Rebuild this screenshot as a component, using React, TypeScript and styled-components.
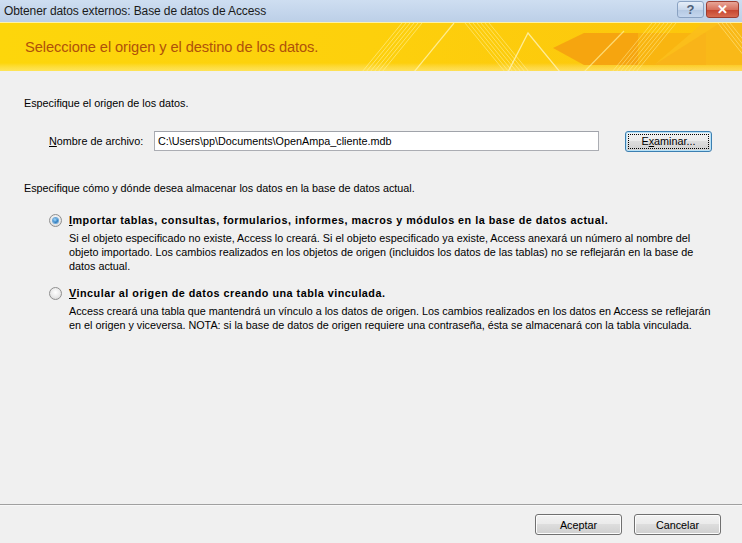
import React from "react";
import styled, { createGlobalStyle } from "styled-components";

const Global = createGlobalStyle`
  html, body { margin: 0; padding: 0; background: #f0f0f0; }
  body { font-family: "Liberation Sans", Arial, sans-serif; }
`;

const Window = styled.div`
  width: 742px;
  height: 543px;
  display: flex;
  flex-direction: column;
  background: #f0f0f0;
  overflow: hidden;
  font-family: "Liberation Sans", Arial, sans-serif;
  font-size: 10.8px;
  color: #000;
`;

const TitleBar = styled.div`
  height: 22px;
  flex: none;
  display: flex;
  align-items: center;
  justify-content: space-between;
  padding: 0 3px 0 4px;
  background: linear-gradient(#cedef1, #bccfe7);
  box-sizing: border-box;
`;

const TitleText = styled.span`
  font-size: 12px;
  color: #1a1a1a;
  letter-spacing: -0.1px;
`;

const TitleButtons = styled.div`
  display: flex;
  gap: 2px;
  align-self: flex-start;
  margin-top: 1px;
`;

const CaptionButton = styled.div<{ $kind: "help" | "close" }>`
  width: ${(p) => (p.$kind === "help" ? 27 : 33)}px;
  height: 17px;
  box-sizing: border-box;
  border-radius: 3px;
  border: 1px solid ${(p) => (p.$kind === "help" ? "#8aa2c2" : "#9c3c30")};
  background: ${(p) =>
    p.$kind === "help"
      ? "linear-gradient(#e6eef8 0%, #c9d8ec 50%, #b4c8e2 51%, #c4d6ee 100%)"
      : "linear-gradient(#e8a597 0%, #d7705e 50%, #c4432d 51%, #d86a4f 100%)"};
  display: flex;
  align-items: center;
  justify-content: center;
  color: ${(p) => (p.$kind === "help" ? "#4f5f78" : "#fff")};
  font-size: 13px;
  font-weight: bold;
  line-height: 1;
`;

const Banner = styled.div`
  position: relative;
  height: 49px;
  flex: none;
  border-top: 1px solid #fff3a6;
  box-sizing: border-box;
  background: linear-gradient(90deg, #fdd60b 0%, #fdd00c 50%, #fcc50d 100%);
  display: flex;
  align-items: center;
  padding-left: 25px;
  overflow: hidden;
`;

const BannerArt = styled.svg`
  position: absolute;
  left: 0;
  top: 0;
  width: 742px;
  height: 49px;
`;

const BannerTitle = styled.h1`
  position: relative;
  margin: 0;
  font-weight: normal;
  font-size: 14.7px;
  letter-spacing: -0.1px;
  color: #b0510a;
  font-family: "Liberation Sans", Arial, sans-serif;
`;

const Content = styled.div`
  flex: 1;
  display: flex;
  flex-direction: column;
  padding: 25px 0 0 24px;
`;

const Para = styled.p`
  margin: 0;
  line-height: 14px;
`;

const FileRow = styled.div`
  display: flex;
  align-items: center;
  margin: 20px 0 0 25px;
  height: 22px;
`;

const FieldLabel = styled.label`
  width: 105px;
  line-height: 14px;
`;

const TextBox = styled.div`
  width: 445px;
  height: 20px;
  box-sizing: border-box;
  border: 1px solid #abadb3;
  border-top-color: #a0a3aa;
  background: #fff;
  display: flex;
  align-items: center;
  padding-left: 3px;
`;

const Button = styled.button<{ $focused?: boolean }>`
  width: 87px;
  height: 21px;
  box-sizing: border-box;
  padding: 0;
  border-radius: 3px;
  border: 1px solid ${(p) => (p.$focused ? "#3c7fb1" : "#707070")};
  background: linear-gradient(#f2f2f2 0%, #ebebeb 45%, #dddddd 50%, #cfcfcf 100%);
  font-family: "Liberation Sans", Arial, sans-serif;
  font-size: 10.8px;
  color: #000;
  position: relative;
  box-shadow: ${(p) => (p.$focused ? "inset 0 0 0 1px #b8e2f8" : "inset 0 0 0 1px #fcfcfc")};
  outline: ${(p) => (p.$focused ? "1px dotted #000" : "none")};
  outline-offset: -4px;
`;

const BrowseButton = styled(Button)`
  margin-left: 26px;
`;

const Section2 = styled(Para)`
  margin-top: 29px;
`;

const OptionList = styled.div`
  display: flex;
  flex-direction: column;
  gap: 13px;
  margin: 18px 0 0 25px;
`;

const Option = styled.div`
  display: grid;
  grid-template-columns: 20px 1fr;
  row-gap: 4px;
`;

const Radio = styled.span<{ $checked?: boolean }>`
  width: 13px;
  height: 13px;
  box-sizing: border-box;
  border-radius: 50%;
  border: 1px solid #8f8f8f;
  background: radial-gradient(circle at 50% 40%, #ffffff 0%, #e9e9e9 55%, #cfcfcf 100%);
  display: flex;
  align-items: center;
  justify-content: center;
  align-self: center;
  &::after {
    content: "";
    display: ${(p) => (p.$checked ? "block" : "none")};
    width: 5px;
    height: 5px;
    border-radius: 50%;
    background: radial-gradient(circle at 40% 35%, #a8dcff 0%, #2d7fc2 60%, #1c4f8a 100%);
    box-shadow: 0 0 0 1px #6aa6d8;
  }
`;

const OptionTitle = styled.span`
  font-weight: bold;
  line-height: 14px;
  letter-spacing: 0.49px;
`;

const OptionDesc = styled.p`
  grid-column: 2;
  margin: 0;
  line-height: 14px;
  width: 648px;
`;

const Footer = styled.div`
  flex: none;
  height: 39px;
  box-sizing: border-box;
  border-top: 1px solid #a0a0a0;
  box-shadow: inset 0 1px 0 #f8f8f8;
  display: flex;
  justify-content: flex-end;
  align-items: flex-start;
  gap: 12px;
  padding: 9px 21px 0 0;
`;

const U = styled.span`
  text-decoration: underline;
`;

function Art() {
  return (
    <BannerArt viewBox="0 0 742 49" aria-hidden="true">
      <defs>
        <linearGradient id="bot" x1="0" y1="0" x2="0" y2="1">
          <stop offset="0" stopColor="#fff" stopOpacity="0" />
          <stop offset="1" stopColor="#fff6b0" stopOpacity="0.5" />
        </linearGradient>
      </defs>
      <rect x="0" y="40" width="742" height="9" fill="url(#bot)" />
      {[0, 4, 8, 12, 16, 20].map((d) => (
        <line key={"a" + d} x1={362 + d} y1={49} x2={402 + d} y2={0} stroke="#fff2a0" strokeOpacity="0.6" strokeWidth="1" />
      ))}
      <line x1="414" y1="49" x2="454" y2="0" stroke="#fff4b0" strokeOpacity="0.8" strokeWidth="1.2" />
      {[0, 4, 8, 12, 16, 20, 24].map((d) => (
        <line key={"b" + d} x1={465 + d} y1={0} x2={505 + d} y2={49} stroke="#fff2a0" strokeOpacity="0.55" strokeWidth="1" />
      ))}
      <polyline points="508,49 528,10 560,49" fill="none" stroke="#fff4b8" strokeOpacity="0.8" strokeWidth="1.3" />
      <polygon points="553,25 584,10 638,10 638,42 584,42" fill="#f59f10" fillOpacity="0.85" />
      <rect x="638" y="10" width="68" height="32" fill="#f7b012" fillOpacity="0.8" />
      <line x1="584" y1="49" x2="624" y2="8" stroke="#fff2a0" strokeOpacity="0.7" strokeWidth="1.2" />
      {[0, 4, 8, 12, 16, 20, 24].map((d) => (
        <line key={"c" + d} x1={612 + d} y1={49} x2={652 + d} y2={0} stroke="#fff2a0" strokeOpacity="0.5" strokeWidth="1" />
      ))}
      <polygon points="654,42 703,0 742,0 742,42" fill="#f8b41c" fillOpacity="0.75" />
      <polygon points="654,42 703,0 720,0" fill="#fcc41a" fillOpacity="0.6" />
      {[0, 4, 8, 12].map((d) => (
        <line key={"d" + d} x1={718 + d} y1={0} x2={748 + d} y2={38} stroke="#fff2a0" strokeOpacity="0.5" strokeWidth="1" />
      ))}
    </BannerArt>
  );
}

export default function App() {
  return (
    <>
      <Global />
      <Window>
        <TitleBar>
          <TitleText>Obtener datos externos: Base de datos de Access</TitleText>
          <TitleButtons>
            <CaptionButton $kind="help">?</CaptionButton>
            <CaptionButton $kind="close">✕</CaptionButton>
          </TitleButtons>
        </TitleBar>
        <Banner>
          <Art />
          <BannerTitle>Seleccione el origen y el destino de los datos.</BannerTitle>
        </Banner>
        <Content>
          <Para>Especifique el origen de los datos.</Para>
          <FileRow>
            <FieldLabel>
              <U>N</U>ombre de archivo:
            </FieldLabel>
            <TextBox>C:\Users\pp\Documents\OpenAmpa_cliente.mdb</TextBox>
            <BrowseButton $focused>
              E<U>x</U>aminar...
            </BrowseButton>
          </FileRow>
          <Section2>Especifique cómo y dónde desea almacenar los datos en la base de datos actual.</Section2>
          <OptionList>
            <Option>
              <Radio $checked />
              <OptionTitle>
                <U>I</U>mportar tablas, consultas, formularios, informes, macros y módulos en la base de datos actual.
              </OptionTitle>
              <OptionDesc>
                Si el objeto especificado no existe, Access lo creará. Si el objeto especificado ya existe, Access anexará un número al nombre del objeto importado. Los cambios realizados en los objetos de origen (incluidos los datos de las tablas) no se reflejarán en la base de datos actual.
              </OptionDesc>
            </Option>
            <Option>
              <Radio />
              <OptionTitle>
                <U>V</U>incular al origen de datos creando una tabla vinculada.
              </OptionTitle>
              <OptionDesc>
                Access creará una tabla que mantendrá un vínculo a los datos de origen. Los cambios realizados en los datos en Access se reflejarán en el origen y viceversa. NOTA: si la base de datos de origen requiere una contraseña, ésta se almacenará con la tabla vinculada.
              </OptionDesc>
            </Option>
          </OptionList>
        </Content>
        <Footer>
          <Button>Aceptar</Button>
          <Button>Cancelar</Button>
        </Footer>
      </Window>
    </>
  );
}
